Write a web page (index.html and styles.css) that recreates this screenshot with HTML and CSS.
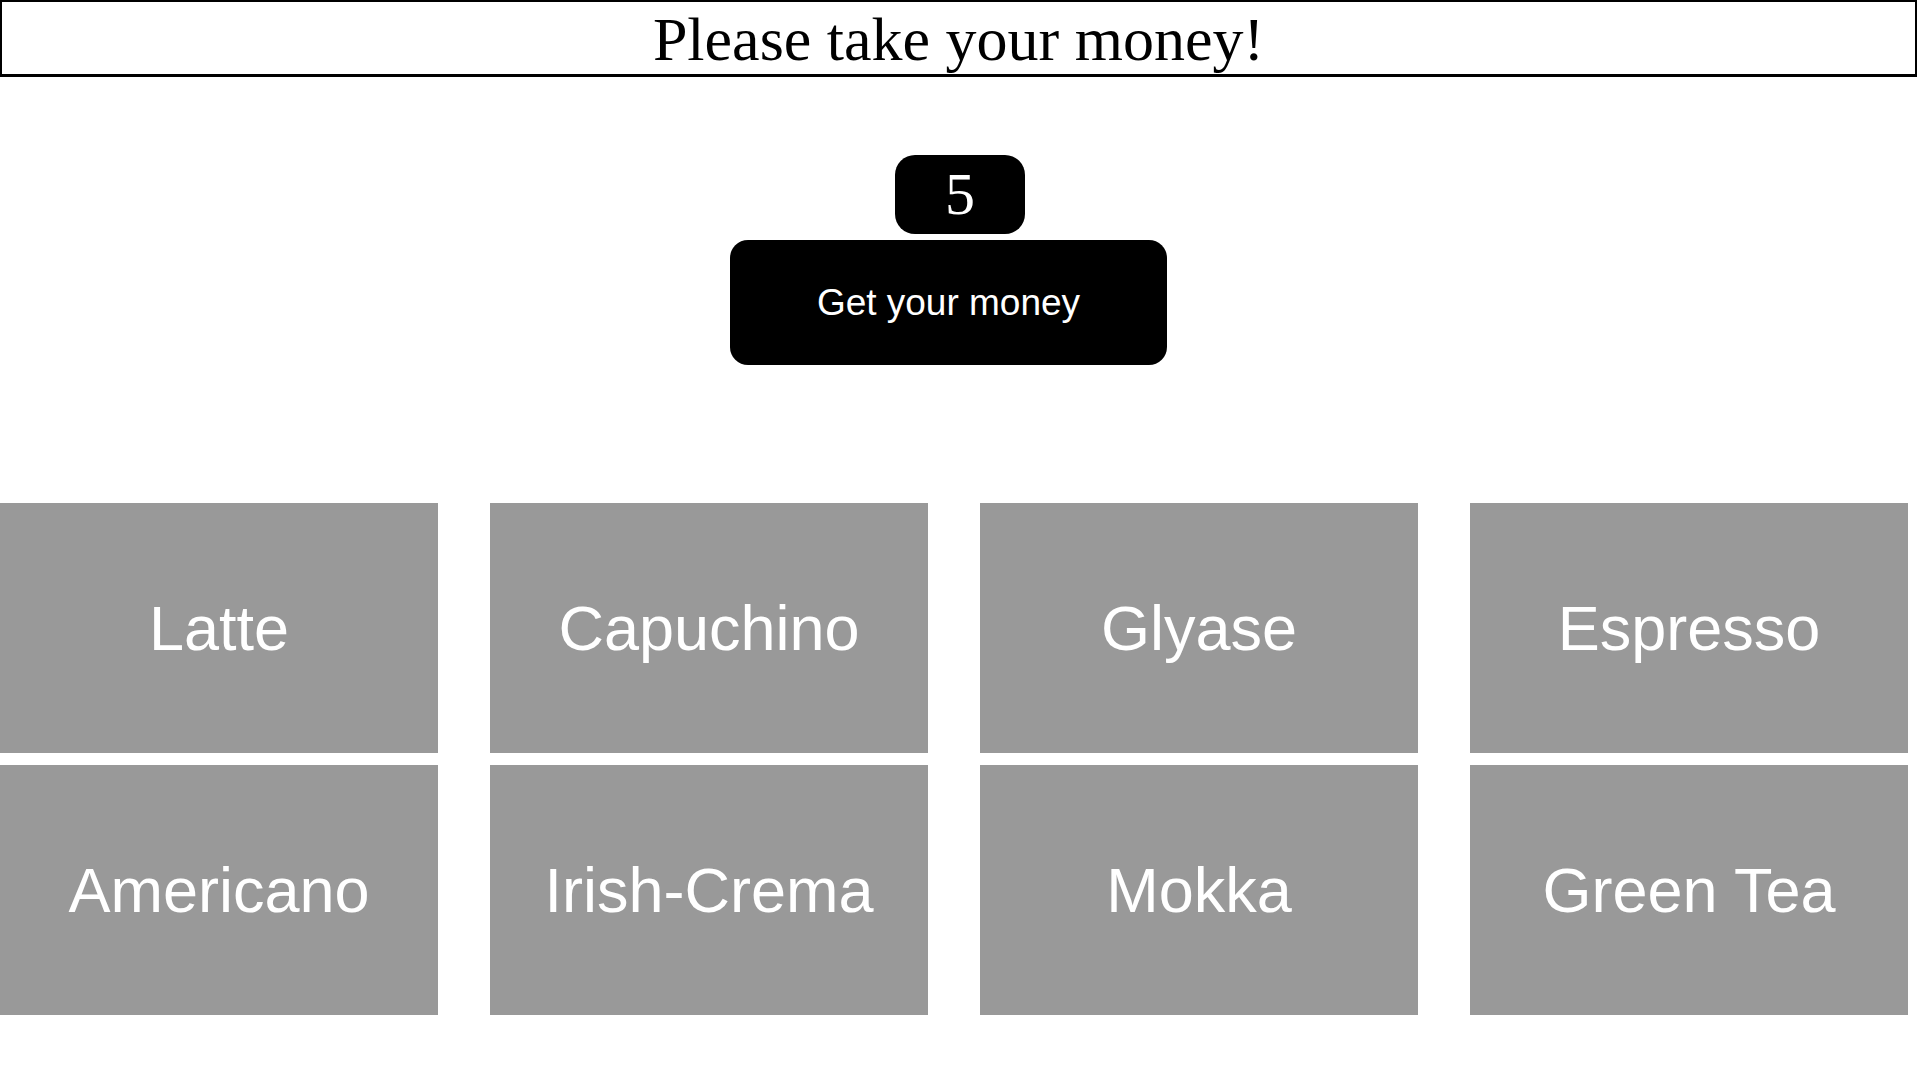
FILE: index.html
```html
<!DOCTYPE html>
<html lang="en">
<head>
<meta charset="utf-8">
<title>Coffee machine</title>
<link rel="stylesheet" href="styles.css">
</head>
<body>
<h1 class="message">Please take your money!</h1>
<div class="money">
  <div class="counter">5</div>
  <button class="get-money">Get your money</button>
</div>
<div class="drinks">
  <div class="drink">Latte</div>
  <div class="drink">Capuchino</div>
  <div class="drink">Glyase</div>
  <div class="drink">Espresso</div>
  <div class="drink">Americano</div>
  <div class="drink">Irish-Crema</div>
  <div class="drink">Mokka</div>
  <div class="drink">Green Tea</div>
</div>
</body>
</html>
```
FILE: styles.css
```css
html, body {
  margin: 0;
  padding: 0;
  background: #ffffff;
}

.message {
  box-sizing: border-box;
  width: 1917px;
  height: 77px;
  margin: 0;
  padding-top: 2px;
  border: 2px solid #000000;
  border-bottom-width: 3px;
  font-family: "Liberation Serif", "Times New Roman", serif;
  font-weight: normal;
  font-size: 62px;
  line-height: 70px;
  text-align: center;
  color: #000000;
}

.money {
  display: flex;
  flex-direction: column;
  align-items: center;
  margin-top: 78px;
}

.counter {
  width: 130px;
  height: 79px;
  border-radius: 20px;
  background: #000000;
  color: #ffffff;
  font-family: "Liberation Serif", "Times New Roman", serif;
  font-size: 60px;
  line-height: 79px;
  text-align: center;
}

.get-money {
  width: 437px;
  height: 125px;
  margin-top: 6px;
  margin-right: 23px;
  border: none;
  border-radius: 18px;
  background: #000000;
  color: #ffffff;
  font-family: "Liberation Sans", Arial, sans-serif;
  font-size: 37px;
  padding: 0;
}

.drinks {
  display: grid;
  grid-template-columns: repeat(4, 438px);
  grid-auto-rows: 250px;
  column-gap: 52px;
  row-gap: 12px;
  margin-top: 138px;
}

.drink {
  display: flex;
  align-items: center;
  justify-content: center;
  background: #999999;
  color: #ffffff;
  font-family: "Liberation Sans", Arial, sans-serif;
  font-size: 63px;
}
```
